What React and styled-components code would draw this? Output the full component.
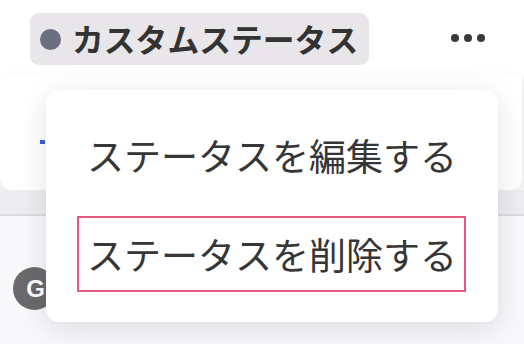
import React from 'react'
import styled, { createGlobalStyle } from 'styled-components'

const GlobalStyle = createGlobalStyle`
  html, body {
    margin: 0;
    padding: 0;
    background: #ffffff;
  }
  * {
    box-sizing: border-box;
  }
`;

const menuItems = [
  { label: 'ステータスを編集する', focused: false },
  { label: 'ステータスを削除する', focused: true },
];

const App = () => {
  return (
    <>
      <GlobalStyle />
      <Screen>
        <Header>
          <StatusPill>
            <StatusDot />
            <span>カスタムステータス</span>
          </StatusPill>
          <MoreButton aria-label="more">
            <i /><i /><i />
          </MoreButton>
        </Header>

        <Card>
          <LinkMark />
        </Card>
        <Divider />

        <ListRow>
          <Avatar>G</Avatar>
        </ListRow>

        <Menu role="menu">
          {menuItems.map((item) => (
            <MenuItem key={item.label} $focused={item.focused} role="menuitem">
              {item.label}
            </MenuItem>
          ))}
        </Menu>
      </Screen>
    </>
  );
}

export default App

const Screen = styled.div`
  position: relative;
  width: 524px;
  height: 344px;
  overflow: hidden;
  background: #f8f8fa;
  font-family: "Noto Sans CJK JP", "Noto Sans", sans-serif;
  color: #333333;
  display: flex;
  flex-direction: column;
`;

const Header = styled.div`
  height: 75px;
  flex: 0 0 auto;
  background: #ffffff;
  display: flex;
  align-items: flex-start;
  justify-content: space-between;
  padding: 13px 39px 0 30px;
`;

const StatusPill = styled.div`
  height: 52px;
  display: flex;
  align-items: center;
  gap: 11px;
  padding: 0 11px 0 10px;
  border-radius: 9px;
  background: #e8e6e8;
  font-size: 31.8px;
  font-weight: 700;
  color: #333333;
  line-height: 1;
  white-space: nowrap;
`;

const StatusDot = styled.span`
  width: 21px;
  height: 21px;
  border-radius: 50%;
  background: #6b7080;
  flex: 0 0 auto;
`;

const MoreButton = styled.div`
  display: flex;
  gap: 5px;
  margin-top: 21px;

  i {
    display: block;
    width: 8px;
    height: 8px;
    border-radius: 50%;
    background: #3a3a3c;
  }
`;

const Card = styled.div`
  height: 115px;
  flex: 0 0 auto;
  margin-right: 2px;
  background: #ffffff;
  border-radius: 0 0 12px 12px;
  box-shadow: 0 6px 18px rgba(30, 30, 60, 0.06);
  padding: 65px 0 0 40px;
`;

const LinkMark = styled.span`
  display: block;
  width: 5px;
  height: 4px;
  background: #3b5fd9;
`;

const Divider = styled.div`
  height: 26px;
  flex: 0 0 auto;
  background: #ededf0;
  border-bottom: 2px solid #dadadd;
`;

const ListRow = styled.div`
  display: flex;
  align-items: center;
  padding: 51px 0 0 13px;
`;

const Avatar = styled.div`
  width: 43px;
  height: 43px;
  border-radius: 50%;
  background: #6b696b;
  color: #ffffff;
  font-family: "Liberation Sans", Arial, sans-serif;
  font-weight: 700;
  font-size: 24px;
  display: flex;
  align-items: center;
  justify-content: center;
  padding-left: 2px;
`;

const Menu = styled.div`
  position: absolute;
  left: 46px;
  top: 90px;
  width: 452px;
  height: 232px;
  background: #ffffff;
  border-radius: 13px;
  box-shadow: 0 6px 28px rgba(20, 20, 50, 0.12);
  padding: 27px 0 0 31px;
  display: flex;
  flex-direction: column;
  gap: 23px;
`;

const MenuItem = styled.div`
  width: 389px;
  height: 76px;
  display: flex;
  align-items: center;
  padding-left: 8px;
  border: 2px solid ${(p) => (p.$focused ? '#e6587c' : 'transparent')};
  font-size: 37px;
  font-weight: 400;
  color: #363636;
  line-height: 1;
  white-space: nowrap;
`;
